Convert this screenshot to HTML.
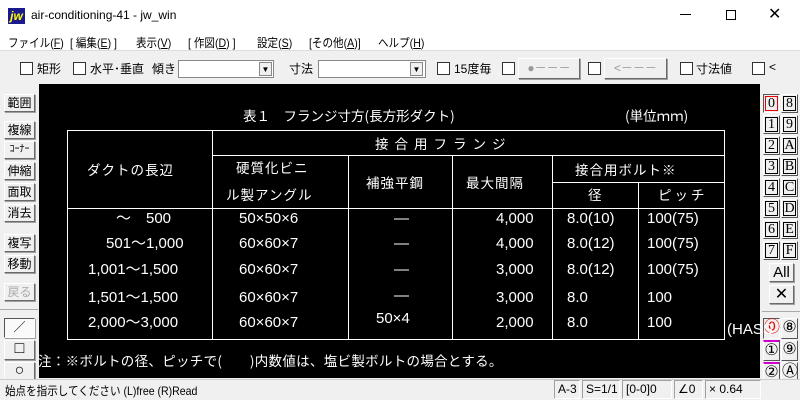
<!DOCTYPE html>
<html><head><meta charset="utf-8"><style>
*{margin:0;padding:0;box-sizing:border-box}
body{width:800px;height:400px;overflow:hidden;background:#f0f0f0;position:relative;font-family:"Liberation Sans","Noto Sans CJK JP",sans-serif;font-size:12px;color:#000}
.a{position:absolute;white-space:nowrap}
.m{position:absolute;white-space:nowrap;transform:scaleX(0.88);transform-origin:left top}
.cb{position:absolute;width:13px;height:13px;border:1px solid #333;background:#fff}
.btn{position:absolute;background:#f0f0f0;border:1px solid;border-color:#fff #6a6a6a #6a6a6a #fff;box-shadow:1px 1px 0 #a0a0a0;text-align:center;font-size:12px;line-height:16px}
.w{color:#fff;font-family:"Noto Sans CJK JP",sans-serif;font-size:13.5px;position:absolute;white-space:nowrap;line-height:16px}
.n{color:#fff;font-family:"Liberation Sans Narrow","Liberation Sans",sans-serif;font-size:15px;position:absolute;white-space:nowrap;line-height:16px}
.ln{position:absolute;background:#fff}
.rb{position:absolute;width:17px;height:19px;background:#f0f0f0;border:1px solid;border-color:#fff #555 #555 #fff;font-family:"Liberation Serif",serif;font-size:14px;text-align:center;line-height:17px}
.rb i{font-style:normal;display:inline-block;width:13px;height:15px;border:1px solid #000;line-height:13px;margin-top:1px}
.sp{position:absolute;top:380px;height:19px;border:1px solid;border-color:#a0a0a0 #fff #fff #a0a0a0;font-size:12px;line-height:17px;padding-left:3px;font-family:"Liberation Sans Narrow","Liberation Sans",sans-serif}
</style></head><body>
<div class="a" style="left:0;top:0;width:800px;height:50px;background:#fff"></div>
<div class="a" style="left:8px;top:8px;width:17px;height:16px;background:#1a1a8c;color:#ff0;font:bold italic 12px 'Liberation Sans';text-align:center;line-height:16px">jw</div>
<div class="a" style="left:31px;top:8px;font-size:12px">air-conditioning-41 - jw_win</div>
<div class="a" style="left:680px;top:14px;width:11px;height:1px;background:#000"></div>
<div class="a" style="left:726px;top:10px;width:10px;height:10px;border:1px solid #000"></div>
<div class="a" style="left:768px;top:4px;font-size:16px">✕</div>
<div class="m" style="left:8px;top:34px">ファイル(<u>F</u>)</div>
<div class="m" style="left:70px;top:34px">[ 編集(<u>E</u>) ]</div>
<div class="m" style="left:136px;top:34px">表示(<u>V</u>)</div>
<div class="m" style="left:188px;top:34px">[ 作図(<u>D</u>) ]</div>
<div class="m" style="left:257px;top:34px">設定(<u>S</u>)</div>
<div class="m" style="left:309px;top:34px">[その他(<u>A</u>)]</div>
<div class="m" style="left:378px;top:34px">ヘルプ(<u>H</u>)</div>
<div class="a" style="left:0;top:50px;width:800px;height:1px;background:#ddd"></div>
<!-- toolbar -->
<div class="cb" style="left:20px;top:62px"></div><div class="a" style="left:37px;top:60px">矩形</div>
<div class="cb" style="left:73px;top:62px"></div><div class="a" style="left:90px;top:60px">水平･垂直</div>
<div class="a" style="left:152px;top:60px">傾き</div>
<div class="a" style="left:178px;top:60px;width:96px;height:18px;background:#fff;border:1px solid #888"></div>
<div class="a" style="left:259px;top:62px;width:13px;height:14px;border:1px solid #888;background:#f0f0f0;font-size:8px;text-align:center;line-height:14px">▼</div>
<div class="a" style="left:289px;top:60px">寸法</div>
<div class="a" style="left:318px;top:60px;width:108px;height:18px;background:#fff;border:1px solid #888"></div>
<div class="a" style="left:410px;top:62px;width:13px;height:14px;border:1px solid #888;background:#f0f0f0;font-size:8px;text-align:center;line-height:14px">▼</div>
<div class="cb" style="left:437px;top:62px"></div><div class="a" style="left:454px;top:60px">15度毎</div>
<div class="cb" style="left:502px;top:62px"></div>
<div class="btn" style="left:518px;top:58px;width:62px;height:21px;color:#999;line-height:19px">●－－－</div>
<div class="cb" style="left:588px;top:62px"></div>
<div class="btn" style="left:604px;top:58px;width:63px;height:21px;color:#999;line-height:19px">&lt;－－－</div>
<div class="cb" style="left:680px;top:62px"></div><div class="a" style="left:696px;top:60px">寸法値</div>
<div class="cb" style="left:752px;top:62px"></div><div class="a" style="left:769px;top:60px">&lt;</div>
<!-- canvas -->
<div class="a" style="left:39px;top:84px;width:721px;height:294px;background:#000"></div>
<!-- left tools -->
<div class="btn" style="left:4px;top:94px;width:31px;height:18px">範囲</div>
<div class="btn" style="left:4px;top:121px;width:31px;height:18px">複線</div>
<div class="btn" style="left:4px;top:141px;width:31px;height:18px;font-size:10px">ｺｰﾅｰ</div>
<div class="btn" style="left:4px;top:162px;width:31px;height:18px">伸縮</div>
<div class="btn" style="left:4px;top:183px;width:31px;height:18px">面取</div>
<div class="btn" style="left:4px;top:204px;width:31px;height:18px">消去</div>
<div class="btn" style="left:4px;top:234px;width:31px;height:18px">複写</div>
<div class="btn" style="left:4px;top:255px;width:31px;height:18px">移動</div>
<div class="btn" style="left:4px;top:283px;width:31px;height:18px;color:#aaa">戻る</div>
<div class="a" style="left:0;top:309px;width:38px;height:1px;background:#aaa"></div>
<div class="btn" style="left:4px;top:318px;width:31px;height:20px;background:#fafafa;border-color:#555 #fff #fff #555">／</div>
<div class="btn" style="left:4px;top:340px;width:31px;height:20px;font-size:16px">□</div>
<div class="btn" style="left:4px;top:362px;width:31px;height:18px;font-size:16px">○</div>
<!-- right panel -->
<div class="rb" style="left:763px;top:94px;border-color:#555 #fff #fff #555"><i style="border-color:#e00">0</i></div><div class="rb" style="left:781px;top:94px"><i>8</i></div>
<div class="rb" style="left:763px;top:115px"><i>1</i></div><div class="rb" style="left:781px;top:115px"><i>9</i></div>
<div class="rb" style="left:763px;top:136px"><i>2</i></div><div class="rb" style="left:781px;top:136px"><i>A</i></div>
<div class="rb" style="left:763px;top:157px"><i>3</i></div><div class="rb" style="left:781px;top:157px"><i>B</i></div>
<div class="rb" style="left:763px;top:178px"><i>4</i></div><div class="rb" style="left:781px;top:178px"><i>C</i></div>
<div class="rb" style="left:763px;top:199px"><i>5</i></div><div class="rb" style="left:781px;top:199px"><i>D</i></div>
<div class="rb" style="left:763px;top:220px"><i>6</i></div><div class="rb" style="left:781px;top:220px"><i>E</i></div>
<div class="rb" style="left:763px;top:241px"><i>7</i></div><div class="rb" style="left:781px;top:241px"><i>F</i></div>
<div class="btn" style="left:769px;top:263px;width:25px;height:19px;font-size:15px;line-height:17px">All</div>
<div class="btn" style="left:769px;top:285px;width:25px;height:19px;font-size:16px;line-height:17px">✕</div>
<div class="a" style="left:762px;top:311px;width:38px;height:1px;background:#aaa"></div>
<div class="rb" style="left:763px;top:318px;height:21px;border-color:#555 #fff #fff #555;color:#e00;font-size:16px">⓪</div><div class="rb" style="left:781px;top:318px;height:21px;font-size:16px">⑧</div>
<div class="rb" style="left:763px;top:340px;height:21px;border-top:2px solid #c0c;font-size:16px">①</div><div class="rb" style="left:781px;top:340px;height:21px;font-size:16px">⑨</div>
<div class="rb" style="left:763px;top:362px;height:18px;border-top:2px solid #c0c;font-size:16px">②</div><div class="rb" style="left:781px;top:362px;height:18px;font-size:16px">Ⓐ</div>
<!-- drawing -->
<div class="w" style="left:243px;top:107px">表１　フランジ寸方(長方形ダクト)</div>
<div class="w" style="left:625px;top:107px">(単位ｍｍ)</div>
<div class="ln" style="left:67px;top:130px;width:658px;height:1px"></div>
<div class="ln" style="left:212px;top:155px;width:513px;height:1px"></div>
<div class="ln" style="left:552px;top:182px;width:173px;height:1px"></div>
<div class="ln" style="left:67px;top:208px;width:658px;height:1px"></div>
<div class="ln" style="left:67px;top:339px;width:658px;height:1px"></div>
<div class="ln" style="left:67px;top:130px;width:1px;height:210px"></div>
<div class="ln" style="left:724px;top:130px;width:1px;height:210px"></div>
<div class="ln" style="left:212px;top:130px;width:1px;height:210px"></div>
<div class="ln" style="left:348px;top:155px;width:1px;height:185px"></div>
<div class="ln" style="left:452px;top:155px;width:1px;height:185px"></div>
<div class="ln" style="left:552px;top:155px;width:1px;height:185px"></div>
<div class="ln" style="left:638px;top:182px;width:1px;height:158px"></div>
<div class="w" style="left:87px;top:161px;letter-spacing:1px">ダクトの長辺</div>
<div class="w" style="left:375px;top:135px;letter-spacing:6px">接合用フランジ</div>
<div class="w" style="left:236px;top:159px;letter-spacing:1px">硬質化ビニ</div>
<div class="w" style="left:226px;top:186px;letter-spacing:1px">ル製アングル</div>
<div class="w" style="left:366px;top:174px;letter-spacing:1px">補強平鋼</div>
<div class="w" style="left:466px;top:174px;letter-spacing:1px">最大間隔</div>
<div class="w" style="left:575px;top:161px;letter-spacing:1px">接合用ボルト※</div>
<div class="w" style="left:588px;top:186px">径</div>
<div class="w" style="left:658px;top:186px;letter-spacing:3px">ピッチ</div>
<div class="n" style="left:116px;top:211px">～　500</div>
<div class="n" style="left:106px;top:236px">501～1,000</div>
<div class="n" style="left:88px;top:262px">1,001～1,500</div>
<div class="n" style="left:88px;top:290px">1,501～1,500</div>
<div class="n" style="left:88px;top:315px">2,000～3,000</div>
<div class="n" style="left:239px;top:211px">50×50×6</div>
<div class="n" style="left:239px;top:236px">60×60×7</div>
<div class="n" style="left:239px;top:262px">60×60×7</div>
<div class="n" style="left:239px;top:290px">60×60×7</div>
<div class="n" style="left:239px;top:315px">60×60×7</div>
<div class="n" style="left:394px;top:211px">―</div>
<div class="n" style="left:394px;top:236px">―</div>
<div class="n" style="left:394px;top:262px">―</div>
<div class="n" style="left:394px;top:288px">―</div>
<div class="n" style="left:376px;top:311px">50×4</div>
<div class="n" style="left:496px;top:211px">4,000</div>
<div class="n" style="left:496px;top:236px">4,000</div>
<div class="n" style="left:496px;top:262px">3,000</div>
<div class="n" style="left:496px;top:290px">3,000</div>
<div class="n" style="left:496px;top:315px">2,000</div>
<div class="n" style="left:567px;top:211px">8.0(10)</div>
<div class="n" style="left:567px;top:236px">8.0(12)</div>
<div class="n" style="left:567px;top:262px">8.0(12)</div>
<div class="n" style="left:567px;top:290px">8.0</div>
<div class="n" style="left:567px;top:315px">8.0</div>
<div class="n" style="left:647px;top:211px">100(75)</div>
<div class="n" style="left:647px;top:236px">100(75)</div>
<div class="n" style="left:647px;top:262px">100(75)</div>
<div class="n" style="left:647px;top:290px">100</div>
<div class="n" style="left:647px;top:315px">100</div>
<div class="n" style="left:727px;top:322px">(HASS</div>
<div class="w" style="left:38px;top:352px;letter-spacing:0.3px">注：※ボルトの径、ピッチで(　　)内数値は、塩ビ製ボルトの場合とする。</div>
<!-- status -->
<div class="a" style="left:0;top:379px;width:800px;height:21px;background:#f0f0f0;border-top:1px solid #ccc"></div>
<div class="m" style="left:5px;top:382px;font-size:12px">始点を指示してください (L)free (R)Read</div>
<div class="sp" style="left:554px;width:26px">A-3</div>
<div class="sp" style="left:582px;width:38px">S=1/1</div>
<div class="sp" style="left:622px;width:50px">[0-0]0</div>
<div class="sp" style="left:674px;width:29px">∠0</div>
<div class="sp" style="left:705px;width:56px">× 0.64</div>
</body></html>
